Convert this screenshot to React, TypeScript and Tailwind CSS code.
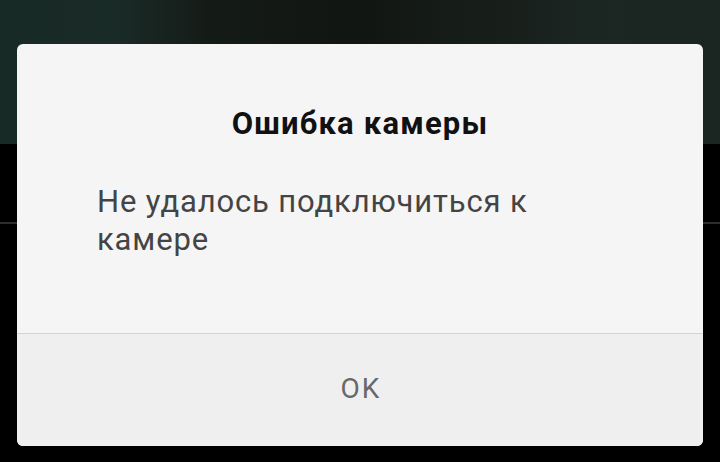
import React from "react";

export default function App() {
  return (
    <div
      className="relative w-[720px] h-[462px] overflow-hidden bg-black"
      style={{ fontFamily: "Roboto, 'Noto Sans', sans-serif" }}
    >
      {/* camera preview behind the dialog */}
      <div className="flex flex-col">
        <div className="h-[144px] bg-[linear-gradient(90deg,#182a26_0%,#1a2b27_16%,#141a16_30%,#121612_50%,#171e1a_68%,#1c2724_85%,#1a2421_100%)]" />
        <div className="h-[78px] bg-black" />
        <div className="h-[2px] bg-[#2c2c2c]" />
      </div>

      {/* error dialog */}
      <div className="absolute left-[17px] top-[44px] w-[686px] h-[402px] rounded-[6px] bg-[#f5f5f5] flex flex-col overflow-hidden">
        <div className="h-[289px] flex flex-col pt-[62px]">
          <h1 className="text-center text-[31px] leading-[36px] font-bold tracking-[1.2px] text-[#111111]">
            Ошибка камеры
          </h1>
          <p className="mt-[41px] pl-[80px] pr-[130px] text-[31px] leading-[38px] tracking-[0.85px] text-[#444444]">
            Не удалось подключиться к камере
          </p>
        </div>
        <div className="h-px bg-[#d4d4d4]" />
        <div className="flex-1 bg-[#efefef] flex items-center justify-center pb-[2px] pl-[2px]">
          <span className="text-[28px] tracking-[2px] text-[#686868]">OK</span>
        </div>
      </div>
    </div>
  );
}
